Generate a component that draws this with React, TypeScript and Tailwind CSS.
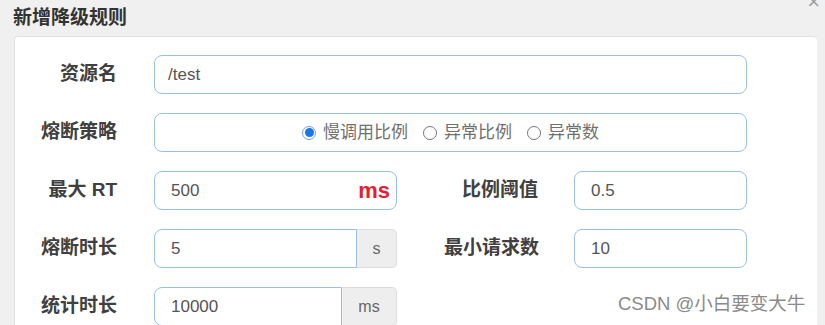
import React from "react";

const font = { fontFamily: '"Liberation Sans", "Noto Sans CJK SC", sans-serif' };

function Label({ children, w }: { children: React.ReactNode; w: string }) {
  return (
    <div className={`${w} shrink-0 text-right text-[19px] font-bold text-[#404040]`}>{children}</div>
  );
}

function Radio({ checked, label }: { checked?: boolean; label: string }) {
  return (
    <div className="flex items-center">
      {checked ? (
        <span className="flex h-[14px] w-[14px] items-center justify-center rounded-full border border-[#6aa6e8] bg-white">
          <span className="h-[9px] w-[9px] rounded-full bg-[#1976e6]" />
        </span>
      ) : (
        <span className="h-[14px] w-[14px] rounded-full border border-[#777] bg-white" />
      )}
      <span className="ml-[7px] text-[17px] text-[#707070]">{label}</span>
    </div>
  );
}

export default function App() {
  return (
    <div style={font} className="relative h-[325px] w-[825px] overflow-hidden bg-[#f0f0f0]">
      <div className="flex h-[36px] items-center justify-between pl-[13px] pr-[5px]">
        <span className="text-[19px] font-bold text-[#333]">新增降级规则</span>
        <span className="-mt-[32px] text-[22px] leading-none text-[#a0a0a0]">×</span>
      </div>
      <div className="ml-[14px] mr-[8px] flex h-[300px] flex-col gap-[19px] rounded-t-[4px] border-l border-t border-[#e2e2e2] bg-white pt-[18px]">
        {/* row 1 */}
        <div className="flex h-[39px] items-center">
          <Label w="w-[102px]">资源名</Label>
          <div className="ml-[37px] flex h-[39px] w-[593px] items-center rounded-[8px] border-[1.5px] border-[#9ac0e6] px-[13px] text-[17px] text-[#555]">
            /test
          </div>
        </div>
        {/* row 2 */}
        <div className="flex h-[39px] items-center">
          <Label w="w-[102px]">熔断策略</Label>
          <div className="ml-[37px] flex h-[39px] w-[593px] items-center justify-center gap-[15px] rounded-[8px] border-[1.5px] border-[#9ac0e6]">
            <Radio checked label="慢调用比例" />
            <Radio label="异常比例" />
            <Radio label="异常数" />
          </div>
        </div>
        {/* row 3 */}
        <div className="flex h-[39px] items-center">
          <Label w="w-[102px]">最大 RT</Label>
          <div className="ml-[37px] flex h-[39px] w-[243px] items-center justify-between rounded-[8px] border-[1.5px] border-[#9ac0e6] pl-[16px] pr-[6px]">
            <span className="text-[17px] text-[#555]">500</span>
            <span className="text-[22px] font-bold text-[#e5202e]">ms</span>
          </div>
          <Label w="w-[141px]">比例阈值</Label>
          <div className="ml-[36px] flex h-[39px] w-[173px] items-center rounded-[8px] border-[1.5px] border-[#9ac0e6] px-[16px] text-[17px] text-[#555]">
            0.5
          </div>
        </div>
        {/* row 4 */}
        <div className="flex h-[39px] items-center">
          <Label w="w-[102px]">熔断时长</Label>
          <div className="ml-[37px] flex h-[39px] w-[243px]">
            <div className="flex w-[203px] items-center rounded-l-[8px] border-[1.5px] border-[#9ac0e6] px-[16px] text-[17px] text-[#555]">
              5
            </div>
            <div className="flex flex-1 items-center justify-center rounded-r-[5px] border border-l-0 border-[#dcdcdc] bg-[#eeeeee] text-[16px] text-[#666]">
              s
            </div>
          </div>
          <Label w="w-[142px]">最小请求数</Label>
          <div className="ml-[35px] flex h-[39px] w-[173px] items-center rounded-[8px] border-[1.5px] border-[#9ac0e6] px-[16px] text-[17px] text-[#555]">
            10
          </div>
        </div>
        {/* row 5 */}
        <div className="flex h-[39px] items-center">
          <Label w="w-[102px]">统计时长</Label>
          <div className="ml-[37px] flex h-[39px] w-[243px]">
            <div className="flex w-[188px] items-center rounded-l-[8px] border-[1.5px] border-[#9ac0e6] px-[16px] text-[17px] text-[#555]">
              10000
            </div>
            <div className="flex flex-1 items-center justify-center rounded-r-[5px] border border-l-0 border-[#dcdcdc] bg-[#eeeeee] text-[16px] text-[#666]">
              ms
            </div>
          </div>
        </div>
      </div>
      <div className="absolute left-[618px] top-[290px] text-[18.5px] text-[#8a8a8a]">CSDN @小白要变大牛</div>
    </div>
  );
}
